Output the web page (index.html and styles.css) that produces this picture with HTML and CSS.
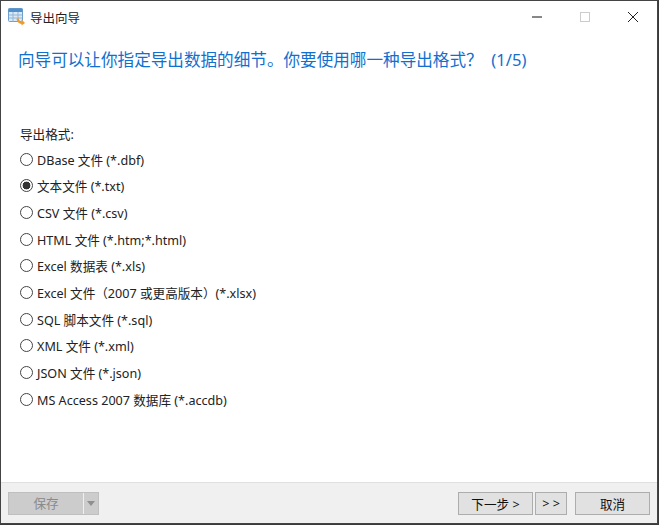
FILE: index.html
```html
<!DOCTYPE html>
<html lang="zh-CN">
<head>
    <meta charset="UTF-8">
    <title>导出向导</title>
    <link rel="stylesheet" href="styles.css">
</head>
<body>
<div class="window">
    <div class="titlebar">
        <svg class="app-icon" width="18" height="18" viewBox="0 0 18 18">
            <rect x="0.5" y="0.5" width="14" height="13" rx="1" fill="#dbe9f6" stroke="#6f9fcc"/>
            <rect x="0.5" y="0.5" width="14" height="3.5" fill="#4f8fcb"/>
            <path d="M5 4v9.5M10 4v9.5M1 7h13M1 10h13" stroke="#8fb5d9" fill="none"/>
            <path d="M9.5 10.5c.6 3 2.5 4.5 5 4.5" stroke="#f09a28" stroke-width="2.2" fill="none"/>
            <path d="M13.5 11.5l3.5 3.5-3.5 2.5z" fill="#f09a28"/>
        </svg>
        <span class="title">导出向导</span>
        <div class="controls">
            <span class="ctl"><svg width="12" height="12" viewBox="0 0 12 12"><path d="M1 6h10" stroke="#111"/></svg></span>
            <span class="ctl"><svg width="12" height="12" viewBox="0 0 12 12"><rect x="1.5" y="1.5" width="9" height="9" fill="none" stroke="#ccc"/></svg></span>
            <span class="ctl"><svg width="12" height="12" viewBox="0 0 12 12"><path d="M1 1l10 10M11 1L1 11" stroke="#222"/></svg></span>
        </div>
    </div>

    <h1 class="heading">向导可以让你指定导出数据的细节。你要使用哪一种导出格式？  (1/5)</h1>

    <div class="content">
        <div class="label">导出格式:</div>
        <div class="option"><span class="radio"></span>DBase 文件 (*.dbf)</div>
        <div class="option"><span class="radio checked"></span>文本文件 (*.txt)</div>
        <div class="option"><span class="radio"></span>CSV 文件 (*.csv)</div>
        <div class="option"><span class="radio"></span>HTML 文件 (*.htm;*.html)</div>
        <div class="option"><span class="radio"></span>Excel 数据表 (*.xls)</div>
        <div class="option"><span class="radio"></span>Excel 文件（2007 或更高版本）(*.xlsx)</div>
        <div class="option"><span class="radio"></span>SQL 脚本文件 (*.sql)</div>
        <div class="option"><span class="radio"></span>XML 文件 (*.xml)</div>
        <div class="option"><span class="radio"></span>JSON 文件 (*.json)</div>
        <div class="option"><span class="radio"></span>MS Access 2007 数据库 (*.accdb)</div>
    </div>

    <div class="footer">
        <div class="save">
            <span class="save-text">保存</span>
            <span class="save-arrow"></span>
        </div>
        <div class="nav">
            <button class="btn next">下一步 &gt;</button>
            <button class="btn skip">&gt; &gt;</button>
            <button class="btn cancel">取消</button>
        </div>
    </div>
</div>
</body>
</html>
```

FILE: styles.css
```css
html, body {
    margin: 0;
    height: 525px;
    overflow: hidden;
    background: #3a3a3a;
}
body {
    font-family: "Noto Sans", "Noto Sans CJK SC", sans-serif;
    font-size: 12.6px;
    color: #222;
}
.window {
    width: 656px;
    height: 522px;
    border: 1px solid #444;
    background: #fff;
    display: flex;
    flex-direction: column;
}
.titlebar {
    height: 32px;
    display: flex;
    align-items: center;
    padding-left: 7px;
}
.app-icon {
    margin-right: 4px;
}
.title {
    font-size: 12.5px;
}
.controls {
    margin-left: auto;
    display: flex;
}
.ctl {
    width: 48px;
    display: flex;
    justify-content: center;
}
.heading {
    margin: 15px 0 0 17px;
    font-size: 16.6px;
    font-weight: normal;
    line-height: 24px;
    white-space: pre;
    color: #1170cf;
}
.content {
    flex: 1;
    padding: 54px 0 0 19px;
}
.label {
    line-height: 18px;
    margin-bottom: 2px;
}
.option {
    height: 26.67px;
    display: flex;
    align-items: center;
    white-space: pre;
}
.radio {
    box-sizing: border-box;
    width: 13px;
    height: 13px;
    margin-right: 4px;
    border: 1px solid #444;
    border-radius: 50%;
    background: #fff;
}
.radio.checked {
    background: radial-gradient(circle, #333 0 3.6px, #fff 4.2px);
}
.footer {
    height: 41px;
    box-sizing: border-box;
    border-top: 1px solid #e0e0e0;
    background: #f0f0f0;
    display: flex;
    justify-content: space-between;
    align-items: center;
    padding: 0 7px;
}
.save {
    width: 91px;
    height: 23px;
    box-sizing: border-box;
    background: #cccccc;
    border: 1px solid #bfbfbf;
    display: flex;
    color: #8a8a8a;
}
.save-text {
    flex: 1;
    text-align: center;
    line-height: 21px;
}
.save-arrow {
    width: 14px;
    border-left: 1px solid #f0f0f0;
    position: relative;
}
.save-arrow::after {
    content: "";
    position: absolute;
    left: 3px;
    top: 8px;
    border: 4px solid transparent;
    border-top: 5px solid #8f8f8f;
    border-bottom: 0;
}
.nav {
    display: flex;
}
.btn {
    height: 23px;
    box-sizing: border-box;
    padding: 0;
    background: #e1e1e1;
    border: 1px solid #adadad;
    font: inherit;
    color: #111;
}
.next {
    width: 75px;
    margin-right: 2px;
}
.skip {
    width: 32px;
    margin-right: 8px;
}
.cancel {
    width: 75px;
}
```
